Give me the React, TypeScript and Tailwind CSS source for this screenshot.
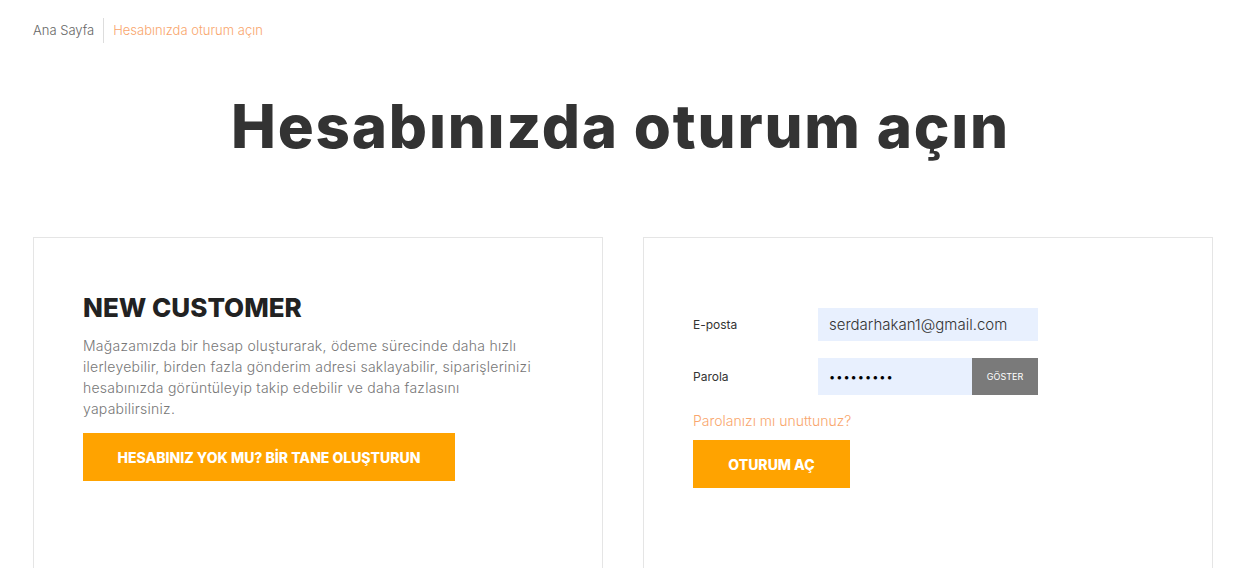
import { useState } from 'react';

export default function App() {
  const [showPassword, setShowPassword] = useState(false);

  return (
    <div className="min-h-screen bg-white font-['Inter',sans-serif] text-[#333]">
      {/* Breadcrumb */}
      <nav className="flex items-center px-[33px] pt-[18px] text-[13px] font-light leading-none">
        <a href="#" className="text-[#666] pr-[9px]">Ana Sayfa</a>
        <span className="h-[25px] w-px bg-[#ddd]" />
        <span className="pl-[9px] text-[#f9a66d]">Hesabınızda oturum açın</span>
      </nav>

      {/* Page title */}
      <h1 className="mt-[53px] text-center text-[60px] font-extrabold leading-none tracking-[1.8px] text-[#333]">
        Hesabınızda oturum açın
      </h1>

      <div className="mt-[81px] grid grid-cols-[570px_570px] gap-[40px] pl-[33px]">
        {/* New customer */}
        <section className="h-[360px] border border-[#e5e5e5] px-[49px] pt-[57px]">
          <h2 className="text-[26px] font-extrabold leading-none text-[#222]">NEW CUSTOMER</h2>
          <p className="mt-[14px] max-w-[455px] text-[14px] font-light leading-[21px] tracking-[0.25px] text-[#777]">
            Mağazamızda bir hesap oluşturarak, ödeme sürecinde daha hızlı ilerleyebilir, birden fazla gönderim adresi saklayabilir, siparişlerinizi hesabınızda görüntüleyip takip edebilir ve daha fazlasını yapabilirsiniz.
          </p>
          <button className="mt-[14px] h-[48px] w-[372px] bg-[#ffa300] text-[14px] font-extrabold uppercase text-white">
            HESABINIZ YOK MU? BİR TANE OLUŞTURUN
          </button>
        </section>

        {/* Login form */}
        <section className="h-[360px] border border-[#e5e5e5] px-[49px] pt-[70px]">
          <form className="flex flex-col">
            <div className="flex items-center">
              <label className="w-[125px] text-[12px] text-[#333]">E-posta</label>
              <input
                type="email"
                defaultValue="serdarhakan1@gmail.com"
                className="h-[33px] w-[220px] bg-[#e8f0fe] px-[11px] text-[15px] font-light text-[#333] outline-none"
              />
            </div>
            <div className="mt-[17px] flex items-center">
              <label className="w-[125px] text-[12px] text-[#333]">Parola</label>
              <div className="flex h-[37px] w-[220px]">
                <input
                  type={showPassword ? 'text' : 'password'}
                  defaultValue="123456789"
                  className="h-full w-[154px] bg-[#e8f0fe] px-[11px] text-[11px] tracking-[1px] text-black outline-none"
                />
                <button
                  type="button"
                  onClick={() => setShowPassword(!showPassword)}
                  className="h-full w-[66px] bg-[#7a7a7a] text-[9px] text-white"
                >
                  GÖSTER
                </button>
              </div>
            </div>
            <a href="#" className="mt-[15px] text-[14px] font-light text-[#f9a66d]">Parolanızı mı unuttunuz?</a>
            <button type="button" className="mt-[9px] h-[48px] w-[157px] bg-[#ffa300] text-[14px] font-extrabold text-white">
              OTURUM AÇ
            </button>
          </form>
        </section>
      </div>
    </div>
  );
}
